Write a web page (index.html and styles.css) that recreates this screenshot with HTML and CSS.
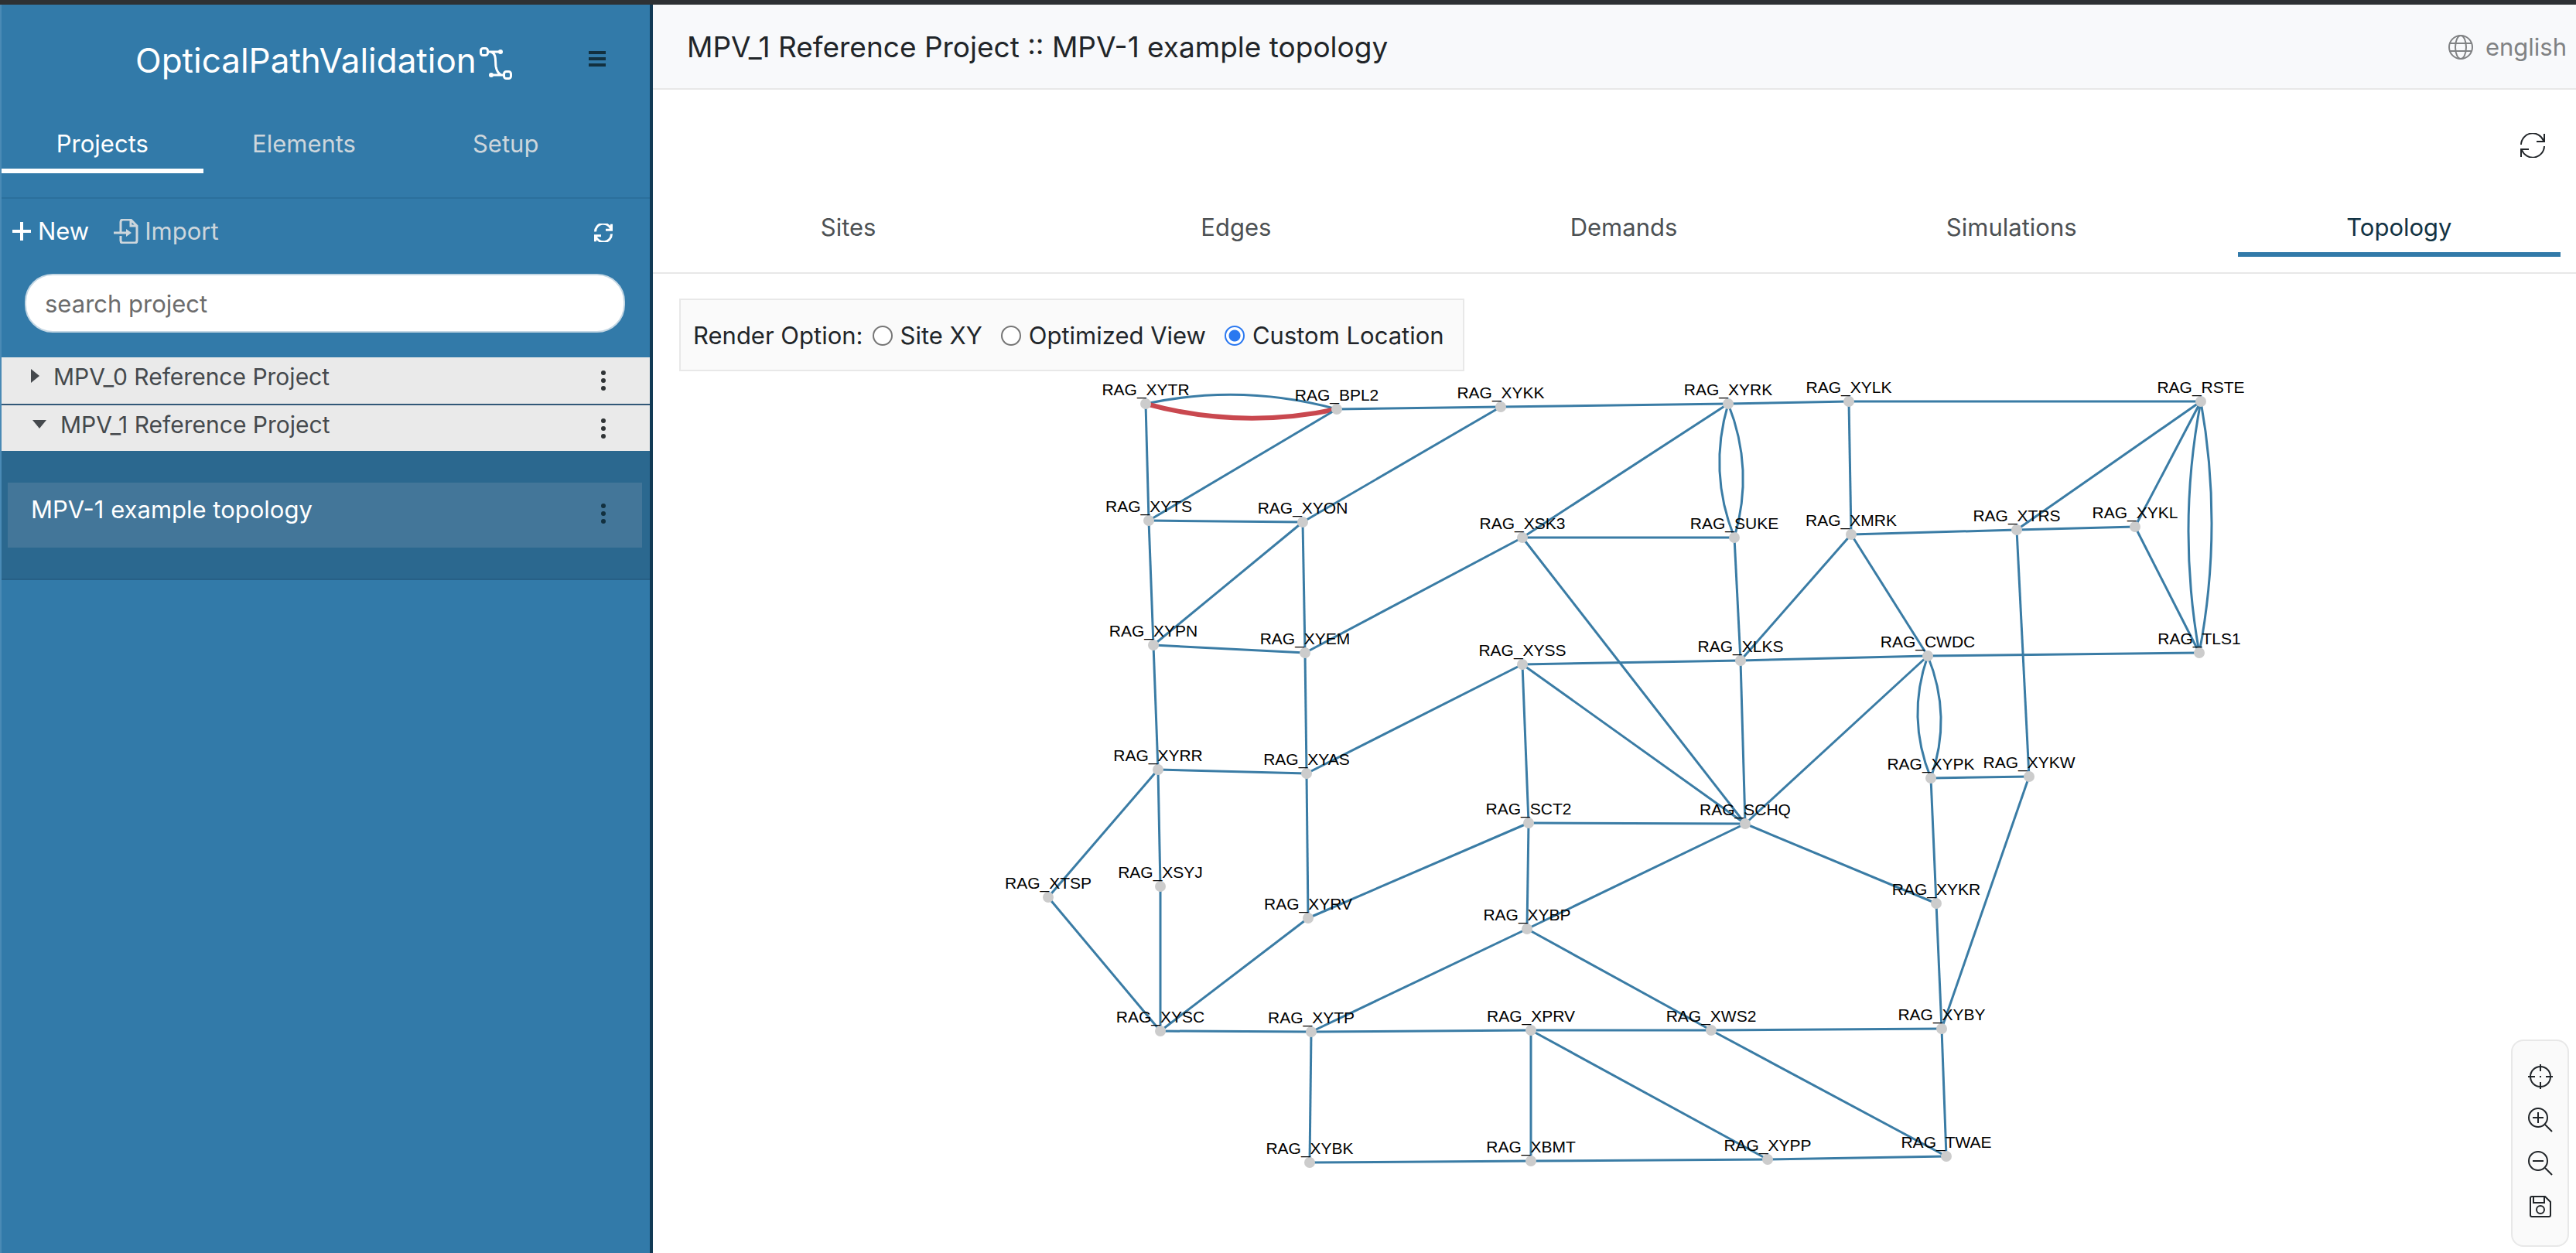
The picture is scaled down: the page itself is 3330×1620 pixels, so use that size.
FILE: index.html
```html
<!DOCTYPE html>
<html lang="en">
<head>
<meta charset="utf-8">
<title>OpticalPathValidation</title>
<link rel="stylesheet" href="styles.css">
</head>
<body>
<div class="app">
  <aside class="sidebar">
    <header class="brand">
      <h1 class="brand-name">OpticalPathValidation</h1>
      <svg class="brand-mark" viewBox="0 0 42 42" aria-hidden="true">
        <rect x="1.500" y="1.500" width="9" height="9" rx="3"/><path d="M11 6h15M15 6c7 3 5 11 6 19 1 6 3 9 7 11M15 36h16"/><rect x="31.500" y="31.500" width="9" height="9" rx="3"/>
        <circle class="dot" cx="27" cy="6" r="3"/><circle class="dot" cx="15" cy="36" r="3"/>
      </svg>
      <button class="icon-button menu-button" aria-label="Menu"><svg class="menu-icon" viewBox="0 0 22 20"><path d="M0 2h22M0 10h22M0 18h22"/></svg></button>
    </header>
    <nav class="side-tabs">
      <a class="side-tab is-active" href="#projects">Projects</a>
      <a class="side-tab" href="#elements">Elements</a>
      <a class="side-tab" href="#setup">Setup</a>
    </nav>
    <div class="actions">
      <button class="action"><svg class="plus-icon" viewBox="0 0 26 26"><path d="M13 1v24M1 13h24"/></svg>New</button>
      <button class="action action-muted"><svg class="import-icon" viewBox="0 0 32 32"><path d="M9 17V4q0-3 3-3h10l8 8v19q0 3-3 3H12q-3 0-3-3v-6M22 1v8h8M0 18h18"/><path class="solid" d="M16 13l7 5-7 5z"/></svg>Import</button>
      <button class="icon-button refresh-small" aria-label="Refresh projects"><svg class="refresh-icon" viewBox="0 0 32 32"><path d="M2 14A14 14 0 0 1 29 9M30 1v10H20M30 18A14 14 0 0 1 3 23M2 31V21h10"/></svg></button>
    </div>
    <div class="search"><input class="search-input" type="text" placeholder="search project" aria-label="search project"></div>
    <ul class="projects">
      <li class="project">
        <span class="caret caret-right"></span><span class="project-name">MPV_0 Reference Project</span>
        <button class="icon-button" aria-label="Options"><svg class="dots" viewBox="0 0 6 38"><circle cx="3" cy="9" r="3"/><circle cx="3" cy="19" r="3"/><circle cx="3" cy="29" r="3"/></svg></button>
      </li>
      <li class="project">
        <span class="caret caret-down"></span><span class="project-name">MPV_1 Reference Project</span>
        <button class="icon-button" aria-label="Options"><svg class="dots" viewBox="0 0 6 38"><circle cx="3" cy="9" r="3"/><circle cx="3" cy="19" r="3"/><circle cx="3" cy="29" r="3"/></svg></button>
      </li>
    </ul>
    <div class="topologies">
      <div class="topology-item"><a class="topology-link" href="#topology">MPV-1 example topology</a>
        <button class="icon-button" aria-label="Options"><svg class="dots" viewBox="0 0 6 38"><circle cx="3" cy="9" r="3"/><circle cx="3" cy="19" r="3"/><circle cx="3" cy="29" r="3"/></svg></button>
      </div>
    </div>
  </aside>
  <main class="main">
    <header class="topbar">
      <h2 class="title">MPV_1 Reference Project :: MPV-1 example topology</h2>
      <button class="language"><svg class="globe-icon" viewBox="0 0 32 32"><circle cx="16" cy="16" r="15"/><ellipse cx="16" cy="16" rx="7" ry="15"/><path d="M2 11h28M2 21h28"/></svg>english</button>
    </header>
    <div class="tools">
      <button class="icon-button" aria-label="Refresh"><svg class="refresh-icon refresh-large" viewBox="0 0 32 32"><path d="M1 15A15 15 0 0 1 30 10M31 1v10H21M31 17A15 15 0 0 1 2 22M1 31V21h10"/></svg></button>
    </div>
    <nav class="tabs">
      <a class="tab" href="#sites">Sites</a>
      <a class="tab" href="#edges">Edges</a>
      <a class="tab" href="#demands">Demands</a>
      <a class="tab" href="#simulations">Simulations</a>
      <a class="tab is-active" href="#topology">Topology</a>
    </nav>
    <section class="canvas">
      <svg class="graph" viewBox="844 354 2486 1266" preserveAspectRatio="xMidYMin meet" role="img" aria-label="Network topology"></svg>
      <div class="render-options" role="radiogroup" aria-labelledby="render-title">
        <span class="render-title" id="render-title">Render Option:</span>
        <label class="option"><input class="radio" type="radio" name="render">Site XY</label>
        <label class="option"><input class="radio" type="radio" name="render">Optimized View</label>
        <label class="option"><input class="radio" type="radio" name="render" checked>Custom Location</label>
      </div>
      <div class="zoom-panel">
        <button class="icon-button" aria-label="Center"><svg class="panel-icon" viewBox="0 0 32 32"><circle cx="16" cy="16" r="13"/><path d="M16 0v9M16 23v9M0 16h9M23 16h9M15 16h2"/></svg></button>
        <button class="icon-button" aria-label="Zoom in"><svg class="panel-icon" viewBox="0 0 32 32"><circle cx="13" cy="13" r="12"/><path d="M22 22l9 9M6 13h14M13 6v14"/></svg></button>
        <button class="icon-button" aria-label="Zoom out"><svg class="panel-icon" viewBox="0 0 32 32"><circle cx="13" cy="13" r="12"/><path d="M22 22l9 9M6 13h14"/></svg></button>
        <button class="icon-button" aria-label="Save"><svg class="panel-icon" viewBox="0 0 32 32"><path d="M5 3h17l7 7v17q0 2-2 2H5q-2 0-2-2V5q0-2 2-2zM7 3v8h14V3"/><circle cx="16" cy="20" r="5"/></svg></button>
      </div>
    </section>
  </main>
</div>
<script src="graph.js"></script>
</body>
</html>
```
FILE: styles.css
```css
* { box-sizing: border-box; }
body { margin: 0; font-family: Inter, "Liberation Sans", sans-serif; font-size: 31px; line-height: 40px; color: #212529; background: #fff; }
button { font: inherit; color: inherit; background: none; border: 0; padding: 0; }
a { color: inherit; text-decoration: none; }
svg { fill: none; stroke: currentColor; stroke-width: 2; display: block; }
.app { display: flex; min-height: 100vh; border-top: 6px solid #2e3134; }
.icon-button { display: flex; align-items: center; justify-content: center; width: 40px; height: 40px; flex: none; }

.sidebar { flex: 0 0 844px; border-right: 4px solid #123a55; border-left: 2px solid #4a8ab5; background: #327aa9; color: #fff; }
.brand { display: flex; align-items: center; gap: 4px; height: 140px; padding: 0 48px 0 173px; }
.brand-name { margin: 4px 0 0; font-size: 44px; font-weight: 400; line-height: 56px; }
.brand-mark { width: 42px; height: 42px; margin-top: 12px; stroke-width: 3; }
.dot { fill: #fff; stroke: none; }
.solid { fill: currentColor; stroke: none; }
.menu-button { margin-left: auto; color: #12303f; }
.menu-icon { width: 22px; height: 20px; stroke-width: 4; }
.side-tabs { display: flex; height: 111px; padding-right: 56px; border-bottom: 2px solid #2b6f9c; }
.side-tab { flex: 1; height: 78px; padding-top: 20px; text-align: center; color: #cdd6dc; }
.side-tab.is-active { color: #fff; border-bottom: 6px solid #fff; }
.actions { display: flex; align-items: center; gap: 32px; padding: 22px 40px 0 13px; }
.action { display: flex; align-items: center; gap: 8px; }
.action-muted { color: #cdd6dc; }
.plus-icon { width: 26px; height: 26px; stroke-width: 4; }
.import-icon { width: 32px; height: 32px; stroke-width: 3; }
.refresh-small { margin: 4px 0 0 auto; height: 36px; }
.refresh-icon { width: 24px; height: 24px; stroke-width: 4; }
.search { padding: 35px 32px 32px 30px; }
.search-input { display: block; width: 100%; height: 76px; padding: 0 24px; border: 2px solid #c4d7e4; border-radius: 36px; background: #fff; font: inherit; color: #333; }
.search-input::placeholder { color: #6c6c6c; opacity: 1; }
.projects { margin: 0; padding: 0; list-style: none; color: #45494d; background: #eaeaea; }
.project { display: flex; align-items: flex-start; height: 60px; padding: 5px 40px 0 38px; font-size: 30px; }
.project + .project { height: 61px; border-top: 2px solid #325878; }
.project .icon-button { margin-top: 5px; }
.caret { border-style: solid; border-color: transparent; }
.caret-right { margin: 10px 18px 0 0; border-width: 9px 0 9px 11px; border-left-color: #45494d; }
.caret-down { margin: 14px 18px 0 2px; border-width: 11px 9px 0; border-top-color: #45494d; }
.project-name { flex: 1; }
.dots { width: 6px; height: 38px; fill: #303436; stroke: none; }
.topologies { padding: 41px 10px 40px 8px; background: #2b688f; border-bottom: 2px solid #276086; }
.topology-item { display: flex; align-items: flex-start; justify-content: space-between; height: 84px; padding: 15px 30px 0; background: #437699; }
.topology-item .icon-button { margin-top: 5px; }
.topology-item .dots { fill: #12303f; }

.main { flex: 1; min-width: 0; display: flex; flex-direction: column; }
.topbar { display: flex; align-items: flex-start; justify-content: space-between; height: 110px; padding: 32px 12px 0 44px; background: #f8f9fb; border-bottom: 2px solid #e8e8e8; }
.title { margin: 0; font-size: 37px; font-weight: 400; line-height: 46px; }
.language { display: flex; align-items: center; gap: 16px; margin-top: 3px; color: #808284; }
.globe-icon { width: 32px; height: 32px; }
.tools { display: flex; justify-content: flex-end; height: 138px; padding: 52px 36px 0; }
.refresh-large { width: 32px; height: 32px; stroke-width: 2; }
.tabs { display: flex; gap: 84px; height: 100px; padding: 18px 20px 0 44px; border-bottom: 2px solid #e8e8e8; }
.tab { flex: 1; height: 60px; padding-top: 2px; text-align: center; color: #4d5154; }
.tab.is-active { color: #123344; border-bottom: 6px solid #327aa9; }
.canvas { position: relative; flex: 1; }
.graph { position: absolute; inset: 0; width: 100%; height: 100%; stroke: none; }
.edge { fill: none; stroke: #3a7ca5; stroke-width: 3; }
.edge-alert { stroke: #c9484f; stroke-width: 6; }
.node { fill: #ccc; }
.node-label { fill: #000; font-family: "Liberation Sans", Arial, sans-serif; font-size: 21px; text-anchor: middle; }
.render-options { position: absolute; left: 34px; top: 32px; display: flex; align-items: center; gap: 24px; height: 94px; padding: 2px 24px 0 16px; border: 2px solid #e8e8e8; background: #fafafa; }
.render-title { margin-right: -12px; }
.option { display: flex; align-items: center; gap: 10px; }
.radio { appearance: none; width: 26px; height: 26px; margin: 0; border: 2px solid #767676; border-radius: 50%; background: #fff; }
.radio:checked { border-color: #2a78f0; background: radial-gradient(circle, #2a78f0 7px, #fff 8px); }
.zoom-panel { position: absolute; right: 9px; bottom: 8px; display: flex; flex-direction: column; align-items: center; gap: 16px; width: 75px; padding: 26px 0 30px; border: 2px solid #e8e8e8; border-radius: 16px; background: #fafafa; }
.panel-icon { width: 32px; height: 32px; }
```
FILE: graph.js
```js
const sites = {
  XYTR: [1481, 522], BPL2: [1728, 529], XYKK: [1940, 526], XYRK: [2234, 522], XYLK: [2390, 519], RSTE: [2845, 519],
  XYTS: [1485, 673], XYON: [1684, 675], XSK3: [1968, 695], SUKE: [2242, 695], XMRK: [2393, 691], XTRS: [2607, 685], XYKL: [2760, 681],
  XYPN: [1491, 834], XYEM: [1687, 844], XYSS: [1968, 859], XLKS: [2250, 854], CWDC: [2492, 848], TLS1: [2843, 844],
  XYRR: [1497, 995], XYAS: [1689, 1000], XYPK: [2496, 1006], XYKW: [2623, 1004],
  XTSP: [1355, 1160], XSYJ: [1500, 1146], XYRV: [1691, 1187], SCT2: [1976, 1064], SCHQ: [2256, 1065], XYBP: [1974, 1201], XYKR: [2503, 1168],
  XYSC: [1500, 1333], XYTP: [1695, 1334], XPRV: [1979, 1332], XWS2: [2212, 1332], XYBY: [2510, 1330],
  XYBK: [1693, 1503], XBMT: [1979, 1501], XYPP: [2285, 1499], TWAE: [2516, 1495]
};

// Third entry is the bend of a parallel edge, fourth an extra class.
const edges = [
  ['XYTR', 'BPL2', -30], ['XYTR', 'BPL2', 30, 'edge-alert'], ['BPL2', 'XYKK'], ['XYKK', 'XYRK'], ['XYRK', 'XYLK'], ['XYLK', 'RSTE'],
  ['XYTR', 'XYTS'], ['BPL2', 'XYTS'], ['XYTS', 'XYON'], ['XYKK', 'XYON'], ['XYTS', 'XYPN'], ['XYON', 'XYPN'], ['XYON', 'XYEM'],
  ['XYPN', 'XYEM'], ['XYEM', 'XSK3'], ['XSK3', 'XYRK'], ['XSK3', 'SUKE'], ['XYRK', 'SUKE', -30], ['XYRK', 'SUKE', 30],
  ['SUKE', 'XLKS'], ['XYLK', 'XMRK'], ['XMRK', 'XLKS'], ['XMRK', 'CWDC'], ['XMRK', 'XTRS'], ['XTRS', 'XYKL'], ['XTRS', 'RSTE'],
  ['XYKL', 'RSTE'], ['XYKL', 'TLS1'], ['RSTE', 'TLS1', -30], ['RSTE', 'TLS1', 30], ['XYSS', 'XLKS'], ['XLKS', 'CWDC'], ['CWDC', 'TLS1'],
  ['XTRS', 'XYKW'], ['XYPK', 'XYKW'], ['CWDC', 'XYPK', -30], ['CWDC', 'XYPK', 30], ['XYPN', 'XYRR'], ['XYEM', 'XYAS'], ['XYRR', 'XYAS'],
  ['XYAS', 'XYSS'], ['XYSS', 'SCT2'], ['XYSS', 'SCHQ'], ['XSK3', 'SCHQ'], ['XLKS', 'SCHQ'], ['CWDC', 'SCHQ'], ['SCT2', 'SCHQ'],
  ['SCT2', 'XYBP'], ['XYBP', 'SCHQ'], ['SCHQ', 'XYKR'], ['XYPK', 'XYKR'], ['XYKR', 'XYBY'], ['XYKW', 'XYBY'], ['XYRR', 'XTSP'],
  ['XYRR', 'XSYJ'], ['XTSP', 'XYSC'], ['XSYJ', 'XYSC'], ['XYAS', 'XYRV'], ['XYRV', 'SCT2'], ['XYRV', 'XYSC'], ['XYSC', 'XYTP'],
  ['XYTP', 'XYBP'], ['XYTP', 'XPRV'], ['XPRV', 'XWS2'], ['XWS2', 'XYBY'], ['XYBP', 'XWS2'], ['XWS2', 'TWAE'], ['XYBY', 'TWAE'],
  ['XYTP', 'XYBK'], ['XYBK', 'XBMT'], ['XPRV', 'XBMT'], ['XPRV', 'XYPP'], ['XBMT', 'XYPP'], ['XYPP', 'TWAE']
];

const graph = document.querySelector('.graph');

function add(name, attributes, text) {
  const element = document.createElementNS('http://www.w3.org/2000/svg', name);
  for (const key in attributes) element.setAttribute(key, attributes[key]);
  if (text) element.textContent = text;
  graph.appendChild(element);
}

for (const [from, to, bend = 0, extra = ''] of edges) {
  const [x1, y1] = sites[from];
  const [x2, y2] = sites[to];
  const length = Math.hypot(x2 - x1, y2 - y1);
  const cx = (x1 + x2) / 2 - bend * (y2 - y1) / length;
  const cy = (y1 + y2) / 2 + bend * (x2 - x1) / length;
  add('path', { class: `edge ${extra}`, d: `M${x1} ${y1}Q${cx} ${cy} ${x2} ${y2}` });
}
for (const site in sites) {
  const [x, y] = sites[site];
  add('circle', { class: 'node', cx: x, cy: y, r: 7 });
  add('text', { class: 'node-label', x: x, y: y - 11 }, `RAG_${site}`);
}
```
